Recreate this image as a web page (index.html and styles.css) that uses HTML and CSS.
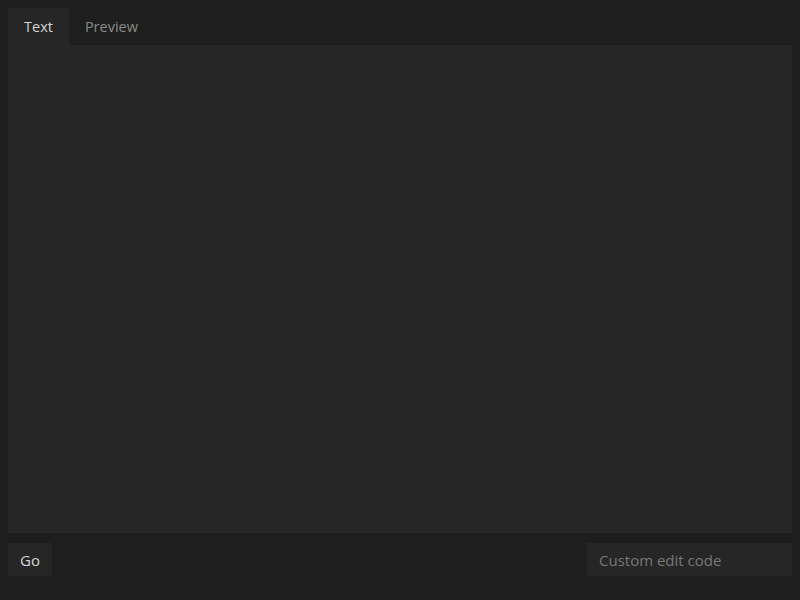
FILE: index.html
```html
<!DOCTYPE html>
<html>
<head>
<meta charset="utf-8">
<link rel="stylesheet" href="styles.css">
</head>
<body>
<div class="app">
  <div class="tabs">
    <div class="tab active">Text</div>
    <div class="tab">Preview</div>
  </div>
  <div class="editor"></div>
  <div class="footer">
    <button class="go">Go</button>
    <input class="code" type="text" placeholder="Custom edit code">
  </div>
</div>
</body>
</html>
```
FILE: styles.css
```css
html, body {
  margin: 0;
  padding: 0;
  background: #1e1e1e;
  height: 100%;
}
body {
  font-family: "Open Sans", "Noto Sans", sans-serif;
  font-size: 15px;
}
.app {
  padding: 8px;
  height: 600px;
  box-sizing: border-box;
  display: flex;
  flex-direction: column;
}
.tabs {
  display: flex;
  height: 37px;
}
.tab {
  padding: 1px 16px 0;
  line-height: 36px;
  font-size: 14.5px;
  color: #8a8a8a;
}
.tab.active {
  background: #262626;
  color: #d4d4d4;
}
.editor {
  background: #262626;
  height: 488px;
}
.footer {
  display: flex;
  justify-content: space-between;
  margin-top: 10px;
  height: 33px;
}
.go {
  background: #262626;
  border: none;
  color: #d4d4d4;
  font-family: inherit;
  font-size: 15px;
  width: 44px;
  height: 33px;
  padding: 0;
}
.code {
  background: #262626;
  border: none;
  width: 205px;
  height: 33px;
  box-sizing: border-box;
  padding: 0 12px;
  font-family: inherit;
  font-size: 15px;
  color: #d4d4d4;
  outline: none;
}
.code::placeholder {
  color: #777;
}
```
